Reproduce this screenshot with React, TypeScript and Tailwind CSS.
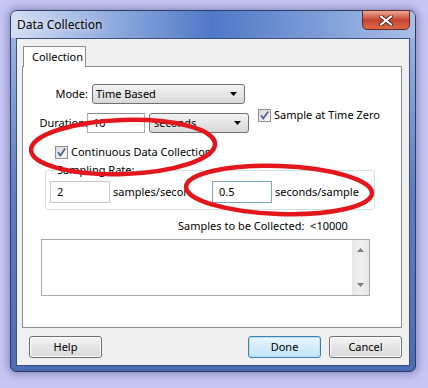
import React from "react";

function Check() {
  return (
    <span className="w-[13px] h-[13px] shrink-0 border border-[#8e8f8f] bg-linear-to-br from-[#d8d8d8] to-[#fafafa] flex items-center justify-center">
      <svg width="11" height="11" viewBox="0 0 11 11">
        <path d="M2 5.2 L4.3 8.6 L9.2 1.6" stroke="#4a5f97" strokeWidth="1.7" fill="none" />
      </svg>
    </span>
  );
}

function Arrow() {
  return (
    <svg width="7" height="4" viewBox="0 0 7 4">
      <path d="M0 0h7L3.5 4z" fill="#000" />
    </svg>
  );
}

function Button({ title, active }: { title: string; active?: boolean }) {
  return (
    <button
      className={
        active
          ? "w-[73px] h-[22px] rounded-[3px] border border-[#3c7fb1] bg-linear-to-b from-[#eaf6fd] to-[#bfe4f8] shadow-[inset_0_0_0_1px_#b7e1f7]"
          : "w-[73px] h-[22px] rounded-[3px] border border-[#707070] bg-linear-to-b from-[#f3f3f3] to-[#d8d8d8] shadow-[inset_0_0_0_1px_#fcfcfc]"
      }
    >
      {title}
    </button>
  );
}

export default function App() {
  return (
    <div className="relative w-[428px] h-[388px] overflow-hidden bg-[#c6c7f3] pt-[10px] pl-[10px] font-['Noto_Sans',sans-serif] text-[11px] leading-[14px] text-black">
      {/* window */}
      <div className="relative w-[406px] h-[362px] rounded-t-[7px] rounded-b-[6px] border border-[#2d3f60] bg-linear-to-b from-[#a7bbe6] via-[#5a7ec4] to-[#4a6db6] shadow-[0_0_8px_2px_rgba(60,60,120,0.45)] flex flex-col">
        <div className="h-[27px] shrink-0 flex items-center pl-[6px] rounded-t-[6px] bg-linear-to-r from-[#d3def3] via-[#4f78c6] to-[#a9bee7]">
          <span className="text-[12px] [text-shadow:0_0_6px_#ffffff]">Data Collection</span>
        </div>
        <div className="absolute top-[-1px] right-[5px] w-[48px] h-[20px] rounded-b-[5px] border border-[#6a2a20] bg-linear-to-b from-[#e9a898] via-[#c8432e] to-[#d86a48] flex items-center justify-center">
          <svg width="14" height="11" viewBox="0 0 14 11">
            <path d="M2 1.5 L12 9.5 M12 1.5 L2 9.5" stroke="#5a2a24" strokeWidth="4" strokeLinecap="round" />
            <path d="M2 1.5 L12 9.5 M12 1.5 L2 9.5" stroke="#ffffff" strokeWidth="2.2" strokeLinecap="round" />
          </svg>
        </div>

        {/* client area */}
        <div className="mx-[5px] mb-[5px] flex-1 border border-[#3d5276] bg-[#f0f0f0] pt-[7px] pl-[5px] flex flex-col">
          <div className="relative z-10 -mb-px ml-px w-[63px] h-[21px] border border-b-0 border-[#898c95] bg-white pl-[8px] pt-[3px]">
            Collection
          </div>
          <div className="w-[380px] h-[262px] border border-[#898c95] bg-white pt-[17px] flex flex-col">
            {/* Mode */}
            <div className="flex items-center h-[20px]">
              <span className="w-[65px] text-right">Mode:</span>
              <div className="ml-[4px] w-[153px] h-[20px] rounded-[3px] border border-[#707070] bg-linear-to-b from-[#f2f2f2] to-[#d9d9d9] flex items-center pl-[3px] pr-[7px]">
                <span className="flex-1">Time Based</span>
                <Arrow />
              </div>
            </div>
            {/* Duration */}
            <div className="flex items-start h-[20px] mt-[9px]">
              <span className="w-[65px] h-[20px] text-right leading-[20px]">Duration:</span>
              <div className="ml-[-1px] w-[58px] h-[20px] border border-[#abadb3] border-t-[#8b8d93] bg-white pl-[5px] leading-[18px]">
                10
              </div>
              <div className="ml-[4px] w-[100px] h-[20px] rounded-[3px] border border-[#707070] bg-linear-to-b from-[#f2f2f2] to-[#d9d9d9] flex items-center pl-[4px] pr-[7px]">
                <span className="flex-1">seconds</span>
                <Arrow />
              </div>
              <div className="ml-[9px] mt-[-5px] flex items-center gap-[3px]">
                <Check />
                <span>Sample at Time Zero</span>
              </div>
            </div>
            {/* Continuous */}
            <div className="mt-[12px] pl-[32px] flex items-center gap-[3px]">
              <Check />
              <span>Continuous Data Collection</span>
            </div>
            {/* Sampling Rate */}
            <fieldset className="mt-[4px] ml-[22px] w-[330px] h-[47px] rounded-[3px] border border-[#d5dfe5] pl-[4px]">
              <legend className="ml-[5px] px-[2px]">Sampling Rate:</legend>
              <div className="flex items-center mt-[4px]">
                <div className="w-[60px] h-[22px] border border-[#c5c8cf] bg-white pl-[6px] leading-[20px]">2</div>
                <span className="ml-[3px] w-[95px] whitespace-nowrap">samples/secon</span>
                <div className="ml-[4px] w-[60px] h-[22px] border border-[#7da2ce] bg-white pl-[6px] leading-[20px]">0.5</div>
                <span className="ml-[3px]">seconds/sample</span>
              </div>
            </fieldset>
            <div className="mt-[9px] pl-[155px] whitespace-pre">Samples to be Collected:  &lt;10000</div>
            {/* log box */}
            <div className="mt-[6px] ml-[18px] w-[329px] h-[57px] border border-[#a9a9a9] bg-white flex justify-end">
              <div className="w-[17px] h-full bg-linear-to-r from-[#e6e6e6] via-[#f0f0f0] to-[#e6e6e6] flex flex-col items-center justify-between py-[8px]">
                <svg width="7" height="4" viewBox="0 0 7 4"><path d="M0 4h7L3.5 0z" fill="#7a7a7a" /></svg>
                <svg width="7" height="4" viewBox="0 0 7 4"><path d="M0 0h7L3.5 4z" fill="#7a7a7a" /></svg>
              </div>
            </div>
          </div>
          {/* buttons */}
          <div className="w-[380px] mt-[8px] flex items-center pl-[7px]">
            <Button title="Help" />
            <div className="flex-1" />
            <Button title="Done" active />
            <div className="w-[8px]" />
            <Button title="Cancel" />
          </div>
        </div>
      </div>

      {/* red annotations */}
      <svg className="absolute inset-0 pointer-events-none" width="428" height="388" viewBox="0 0 428 388">
        <ellipse cx="123" cy="147" rx="92" ry="27" fill="none" stroke="#e3161c" strokeWidth="4.5" transform="rotate(-2 123 147)" />
        <ellipse cx="279" cy="190" rx="93" ry="24" fill="none" stroke="#e3161c" strokeWidth="4.5" transform="rotate(2 279 190)" />
      </svg>
    </div>
  );
}
